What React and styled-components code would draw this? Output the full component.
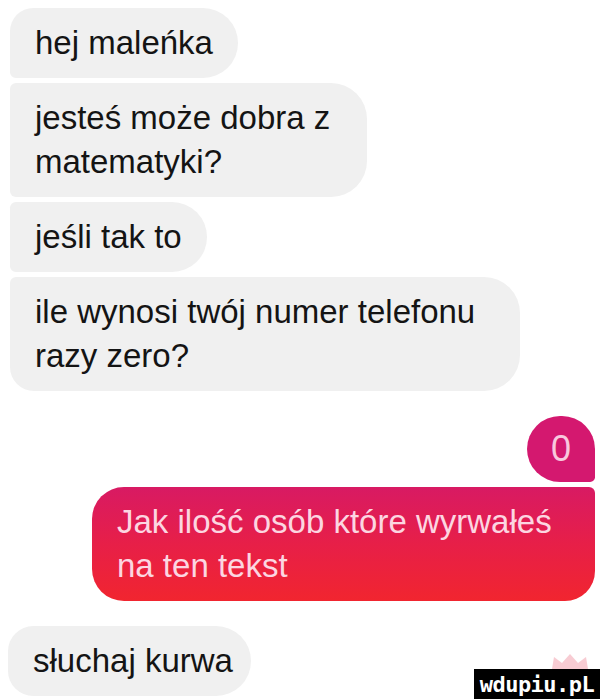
import React from "react"
import styled, { createGlobalStyle } from "styled-components"

const Global = createGlobalStyle`
  html, body {
    margin: 0;
    background: #fff;
  }
  body {
    font-family: "Liberation Sans", Arial, sans-serif;
  }
`

const Chat = styled.div`
  display: flex;
  flex-direction: column;
  gap: 5px;
  width: 600px;
  height: 700px;
  box-sizing: border-box;
  padding: 8px 5px 0 10px;
  overflow: hidden;
`

const Bubble = styled.div`
  align-self: flex-start;
  box-sizing: border-box;
  width: ${props => (props.$w ? `${props.$w}px` : "fit-content")};
  padding: 13px 25px;
  background: #f0f0f0;
  color: #141414;
  font-size: 33px;
  line-height: 44px;
  border-radius: ${props => props.$radius || "6px 36px 36px 6px"};
  white-space: nowrap;
`

const Badge = styled.div`
  align-self: flex-end;
  margin-top: 20px;
  width: 68px;
  height: 66px;
  display: flex;
  align-items: center;
  justify-content: center;
  background: #d4186f;
  color: #f8c8de;
  font-size: 36px;
  border-radius: 34px 34px 5px 34px;
`

const Reply = styled.div`
  align-self: flex-end;
  box-sizing: border-box;
  width: 503px;
  padding: 13px 25px;
  background: linear-gradient(180deg, #d81a63 0%, #e71f48 50%, #f1252f 100%);
  color: #fcd6e1;
  font-size: 33px;
  line-height: 44px;
  border-radius: 32px 6px 30px 32px;
  white-space: nowrap;
`

const LastRow = styled.div`
  display: flex;
  justify-content: space-between;
  align-items: flex-end;
  margin-top: 20px;
  margin-left: -2px;
  margin-right: -5px;

  ${Bubble} {
    margin-bottom: 3px;
    padding-right: 18px;
  }
`

const Mark = styled.div`
  display: flex;
  flex-direction: column;
  align-items: flex-end;
`

const Crown = styled.svg`
  margin-right: 10px;
  opacity: 0.5;
`

const MarkBox = styled.div`
  background: #000;
  color: #fff;
  height: 30px;
  width: 126px;
  display: flex;
  align-items: center;
  justify-content: center;
  font-family: "DejaVu Sans Mono", monospace;
  font-weight: bold;
  font-size: 22px;
  letter-spacing: -0.5px;
`

const App = () => {
    return <>
        <Global />
        <Chat>
            <Bubble $radius="24px 36px 36px 6px">hej maleńka</Bubble>
            <Bubble $w={357}>jesteś może dobra z<br />matematyki?</Bubble>
            <Bubble>jeśli tak to</Bubble>
            <Bubble $w={510} $radius="6px 36px 36px 24px">ile wynosi twój numer telefonu<br />razy zero?</Bubble>

            <Badge>0</Badge>
            <Reply>Jak ilość osób które wyrwałeś<br />na ten tekst</Reply>

            <LastRow>
                <Bubble $radius="26px 36px 36px 26px">słuchaj kurwa</Bubble>
                <Mark>
                    <Crown width="40" height="16" viewBox="0 0 40 16">
                        <path d="M2 16 L4 4 L12 10 L20 1 L28 10 L36 4 L38 16 Z" fill="#f29aa8" />
                    </Crown>
                    <MarkBox>wdupiu.pL</MarkBox>
                </Mark>
            </LastRow>
        </Chat>
    </>
}

export default App
